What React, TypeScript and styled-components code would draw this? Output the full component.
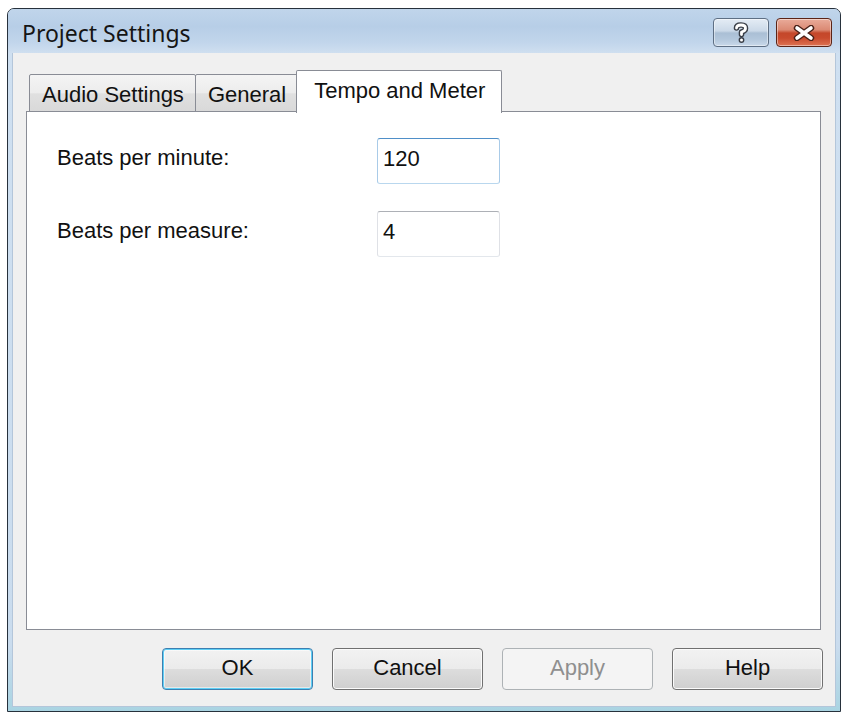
import styled, { createGlobalStyle } from "styled-components";

const GlobalStyle = createGlobalStyle`
  html, body {
    margin: 0;
    padding: 0;
    background: #ffffff;
  }

  body {
    font-family: "Liberation Sans", Arial, sans-serif;
  }
`;

const HelpGlyph = () => (
  <svg width="16" height="22" viewBox="0 0 16 22">
    <g fill="none" strokeLinecap="round" strokeLinejoin="round">
      <path
        d="M3.5 6 Q3.5 3 8 3 Q12.5 3 12.5 6.2 Q12.5 9 8.5 10 L8.5 12.5"
        stroke="#3a3f48"
        strokeWidth="5.6"
      />
      <path
        d="M3.5 6 Q3.5 3 8 3 Q12.5 3 12.5 6.2 Q12.5 9 8.5 10 L8.5 12.5"
        stroke="#ffffff"
        strokeWidth="2.8"
      />
    </g>
    <circle cx="8.5" cy="18" r="2.9" fill="#3a3f48" />
    <circle cx="8.5" cy="18" r="1.5" fill="#ffffff" />
  </svg>
);

const CloseGlyph = () => (
  <svg width="24" height="16" viewBox="0 0 24 16">
    <g fill="none" strokeLinecap="round">
      <path d="M5 3 L19 13 M19 3 L5 13" stroke="#4a2118" strokeWidth="6.4" />
      <path d="M5 3 L19 13 M19 3 L5 13" stroke="#ffffff" strokeWidth="3.6" />
    </g>
  </svg>
);

export default function App() {
  return (
    <>
      <GlobalStyle />
      <Page>
        <Window>
          <TitleBar>
            <Title>Project Settings</Title>
            <CaptionButtons>
              <CaptionButton $kind="help">
                <HelpGlyph />
              </CaptionButton>
              <CaptionButton $kind="close">
                <CloseGlyph />
              </CaptionButton>
            </CaptionButtons>
          </TitleBar>

          <Frame>
            <Client>
              <TabStrip>
                <Tab>Audio Settings</Tab>
                <Tab>General</Tab>
                <Tab $active>Tempo and Meter</Tab>
              </TabStrip>

              <Panel>
                <FieldGrid>
                  <FieldLabel>Beats per minute:</FieldLabel>
                  <TextBox $focused defaultValue="120" />
                  <FieldLabel>Beats per measure:</FieldLabel>
                  <TextBox defaultValue="4" />
                </FieldGrid>
              </Panel>

              <ButtonRow>
                <PushButton $default>OK</PushButton>
                <PushButton>Cancel</PushButton>
                <PushButton disabled>Apply</PushButton>
                <PushButton>Help</PushButton>
              </ButtonRow>
            </Client>
          </Frame>
        </Window>
      </Page>
    </>
  );
}

const Page = styled.div`
  padding: 8px 0 0 7px;
`;

const Window = styled.div`
  width: 834px;
  height: 704px;
  box-sizing: border-box;
  display: flex;
  flex-direction: column;
  border: 1px solid #27313c;
  border-radius: 7px 7px 0 0;
  background: #cadcee;
  overflow: hidden;
`;

const TitleBar = styled.div`
  height: 44px;
  flex: none;
  display: flex;
  align-items: flex-start;
  justify-content: space-between;
  padding: 9px 8px 0 14px;
  box-sizing: border-box;
  background: linear-gradient(
    180deg,
    #c0d5eb 0%,
    #b7cee7 40%,
    #c1d5eb 75%,
    #cfdff0 100%
  );
`;

const Title = styled.span`
  font-family: "Noto Sans", "Open Sans", sans-serif;
  font-size: 23px;
  line-height: 31px;
  color: #151515;
`;

const CaptionButtons = styled.div`
  display: flex;
  gap: 7px;
`;

const CaptionButton = styled.div<{ $kind: "help" | "close" }>`
  width: 56px;
  height: 29px;
  box-sizing: border-box;
  display: flex;
  align-items: center;
  justify-content: center;
  border-radius: 4px;
  border: 1px solid ${(p) => (p.$kind === "close" ? "#5b2417" : "#5e6f84")};
  box-shadow: inset 0 0 0 1px rgba(255, 255, 255, 0.45);
  background: ${(p) =>
    p.$kind === "close"
      ? "linear-gradient(180deg, #e9ab9a 0%, #db8a74 40%, #c4472a 52%, #c84a2d 70%, #de7353 100%)"
      : "linear-gradient(180deg, #e4ecf5 0%, #cbd9e8 44%, #aabfd5 52%, #b3c7dc 75%, #c9d9ea 100%)"};
`;

const Frame = styled.div`
  flex: 1;
  display: flex;
  padding: 0 4px 4px 4px;
  background: linear-gradient(180deg, #cfe0f1 0%, #cadcee 90%, #a9d4e2 100%);
`;

const Client = styled.div`
  flex: 1;
  display: flex;
  flex-direction: column;
  background: #f0f0f0;
  border: 1px solid #b4c6da;
  border-top: none;
  padding: 17px 14px 16px 13px;
`;

const TabStrip = styled.div`
  display: flex;
  align-items: flex-end;
  height: 42px;
  padding-left: 3px;
`;

const Tab = styled.div<{ $active?: boolean }>`
  position: relative;
  box-sizing: border-box;
  height: ${(p) => (p.$active ? "43px" : "38px")};
  margin-left: ${(p) => (p.$active ? "-2px" : "-1px")};
  margin-bottom: ${(p) => (p.$active ? "-1px" : "0")};
  padding: ${(p) => (p.$active ? "7px 16px 0 17px" : "7px 11px 0 12px")};
  z-index: ${(p) => (p.$active ? 2 : 1)};
  border: 1px solid #898c95;
  border-bottom: ${(p) => (p.$active ? "none" : "1px solid #898c95")};
  border-radius: 2px 2px 0 0;
  font-size: 22px;
  line-height: 25px;
  color: #111111;
  white-space: nowrap;
  background: ${(p) =>
    p.$active
      ? "#ffffff"
      : "linear-gradient(180deg, #f4f4f4 0%, #ececec 50%, #e0e0e0 52%, #d9d9d9 100%)"};

  &:first-child {
    margin-left: 0;
  }
`;

const Panel = styled.div`
  flex: 1;
  background: #ffffff;
  border: 1px solid #898c95;
  margin-top: -1px;
  padding: 26px 0 0 30px;
`;

const FieldGrid = styled.div`
  display: grid;
  grid-template-columns: 320px 123px;
  row-gap: 27px;
`;

const FieldLabel = styled.div`
  font-size: 22px;
  line-height: 25px;
  padding-top: 7px;
  color: #111111;
  white-space: nowrap;
`;

const TextBox = styled.input<{ $focused?: boolean }>`
  width: 123px;
  height: 46px;
  box-sizing: border-box;
  margin: 0;
  padding: 0 0 4px 5px;
  font-family: "Liberation Sans", Arial, sans-serif;
  font-size: 22px;
  color: #111111;
  background: #ffffff;
  border: 1px solid;
  border-radius: 3px;
  border-color: ${(p) =>
    p.$focused
      ? "#4f8fc8 #a9cbe8 #b9d7ee #a9cbe8"
      : "#adb0b6 #dfe1e6 #e3e7ec #dfe1e6"};
  outline: none;
`;

const ButtonRow = styled.div`
  display: flex;
  justify-content: flex-end;
  gap: 19px;
  margin-top: 18px;
  margin-right: -2px;
`;

const PushButton = styled.button<{ $default?: boolean }>`
  width: 151px;
  height: 42px;
  box-sizing: border-box;
  padding: 0 0 2px 0;
  font-family: "Liberation Sans", Arial, sans-serif;
  font-size: 22px;
  color: #111111;
  border-radius: 4px;
  border: 1px solid ${(p) => (p.$default ? "#3c7fb1" : "#707070")};
  box-shadow: ${(p) =>
    p.$default
      ? "inset 0 0 0 1px #5fcff5, inset 0 0 0 2px rgba(255,255,255,0.5)"
      : "inset 0 0 0 1px #fbfbfb"};
  background: linear-gradient(
    180deg,
    #f2f2f2 0%,
    #ebebeb 50%,
    #dddddd 50%,
    #cfcfcf 100%
  );
  cursor: default;

  &:disabled {
    color: #8f8f8f;
    border-color: #adb2b5;
    box-shadow: none;
    background: #f4f4f4;
  }
`;
